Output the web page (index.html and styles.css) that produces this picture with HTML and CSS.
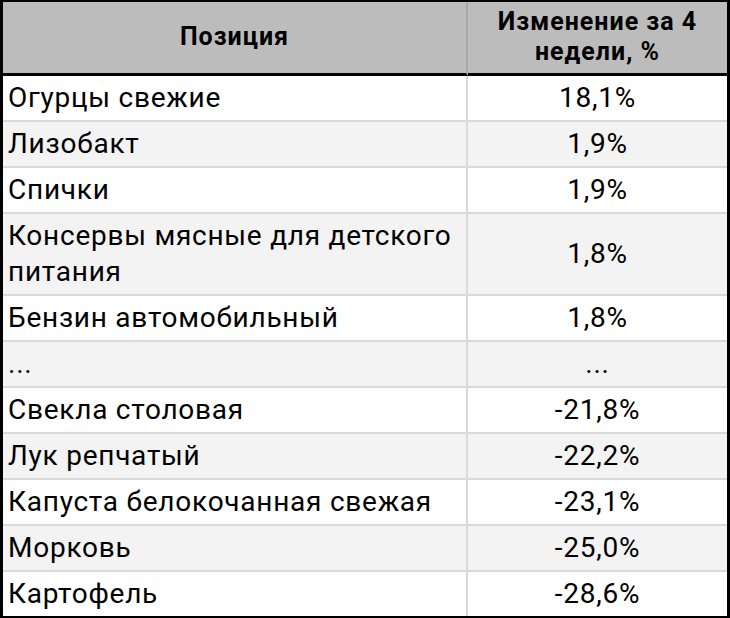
FILE: index.html
```html
<!DOCTYPE html>
<html lang="ru">
<head>
<meta charset="utf-8">
<title>Изменение цен</title>
<link rel="stylesheet" href="styles.css">
</head>
<body>
<table class="prices">
  <thead>
    <tr>
      <th class="c-name">Позиция</th>
      <th class="c-val">Изменение за 4<br>недели, %</th>
    </tr>
  </thead>
  <tbody>
    <tr><td class="c-name">Огурцы свежие</td><td class="c-val">18,1%</td></tr>
    <tr><td class="c-name">Лизобакт</td><td class="c-val">1,9%</td></tr>
    <tr><td class="c-name">Спички</td><td class="c-val">1,9%</td></tr>
    <tr><td class="c-name">Консервы мясные для детского питания</td><td class="c-val">1,8%</td></tr>
    <tr><td class="c-name">Бензин автомобильный</td><td class="c-val">1,8%</td></tr>
    <tr><td class="c-name">...</td><td class="c-val">...</td></tr>
    <tr><td class="c-name">Свекла столовая</td><td class="c-val">-21,8%</td></tr>
    <tr><td class="c-name">Лук репчатый</td><td class="c-val">-22,2%</td></tr>
    <tr><td class="c-name">Капуста белокочанная свежая</td><td class="c-val">-23,1%</td></tr>
    <tr><td class="c-name">Морковь</td><td class="c-val">-25,0%</td></tr>
    <tr><td class="c-name">Картофель</td><td class="c-val">-28,6%</td></tr>
  </tbody>
</table>
</body>
</html>
```

FILE: styles.css
```css
html, body {
  margin: 0;
  padding: 0;
  background: #ffffff;
}

.prices {
  box-sizing: border-box;
  width: 730px;
  table-layout: fixed;
  border-collapse: separate;
  border-spacing: 0;
  border-style: solid;
  border-color: #000000;
  border-width: 2px 3px 3px 3px;
  font-family: Roboto, "Liberation Sans", Arial, sans-serif;
  color: #000000;
}

.prices th,
.prices td {
  box-sizing: border-box;
  margin: 0;
}

.prices th {
  background: #bcbcbc;
  font-weight: 700;
  font-size: 25px;
  letter-spacing: 1px;
  line-height: 30px;
  padding: 5px 4px 6px;
  text-align: center;
  vertical-align: middle;
  border-bottom: 3px solid #000000;
}

.prices th.c-name {
  width: 465px;
  border-right: 2px solid #a8a8a8;
}

.prices td {
  font-size: 28px;
  letter-spacing: 0.75px;
  line-height: 36px;
  padding: 4px 5px 4px 5px;
  border-bottom: 2px solid #d9d9d9;
  vertical-align: middle;
}

.prices td.c-name {
  text-align: left;
  border-right: 2px solid #d9d9d9;
}

.prices td.c-val {
  text-align: center;
}

.prices tbody tr:nth-child(even) td {
  background: #f3f3f3;
}

.prices tbody tr:last-child td {
  border-bottom: none;
}
```
